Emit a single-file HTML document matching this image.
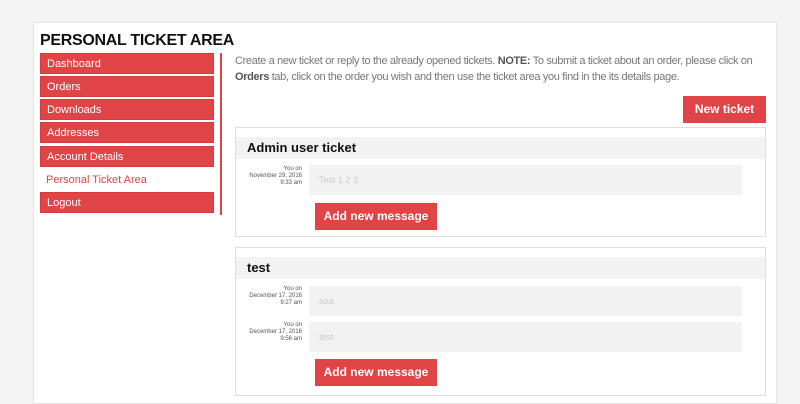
<!DOCTYPE html>
<html><head><style>
body{margin:0;width:800px;height:400px;background:#f3f3f3;font-family:"Liberation Sans",sans-serif;position:relative;overflow:hidden}
.a{position:absolute}
.panel{left:33px;top:22px;width:742px;height:380px;background:#fff;border:1px solid #e6e6e6}
.m{left:40px;width:174px;height:21px;background:#e04446;color:#fff;font-size:11px;line-height:21px;text-indent:6px;border:1px solid #d8393b;box-sizing:border-box}
.btn{background:#e04446;color:#fff;font-size:12px;font-weight:bold;text-align:center}
.box{left:235px;width:531px;background:#fff;border:1px solid #dedede;box-sizing:border-box}
.hd{left:236px;width:529px;height:22px;background:#f2f2f2;font-size:13px;font-weight:bold;line-height:22px;text-indent:11px;color:#111}
.dt{left:236px;width:66px;text-align:right;font-size:6px;line-height:7px;color:#555}
.msg{left:309px;width:433px;height:30px;background:#f2f2f2;color:#ccc;font-size:9px;line-height:30px;text-indent:10px}
</style></head><body>
<div class="a panel"></div>
<div class="a" style="left:40px;top:32px;font-size:16px;font-weight:bold;color:#111;letter-spacing:-0.3px">PERSONAL TICKET AREA</div>
<div class="a m" style="top:53px">Dashboard</div>
<div class="a m" style="top:76px">Orders</div>
<div class="a m" style="top:99px">Downloads</div>
<div class="a m" style="top:122px">Addresses</div>
<div class="a m" style="top:146px">Account Details</div>
<div class="a" style="left:46px;top:174px;font-size:11px;color:#e04446">Personal Ticket Area</div>
<div class="a m" style="top:192px">Logout</div>
<div class="a" style="left:220px;top:53px;width:2px;height:162px;background:#e04446"></div>
<div class="a" style="left:235px;top:53px;white-space:nowrap;font-size:11px;line-height:16px;color:#777;letter-spacing:-0.35px">Create a new ticket or reply to the already opened tickets. <b style="color:#555">NOTE:</b> To submit a ticket about an order, please click on<br><b style="color:#555">Orders</b> tab, click on the order you wish and then use the ticket area you find in the its details page.</div>
<div class="a btn" style="left:683px;top:96px;width:83px;height:27px;line-height:27px">New ticket</div>
<div class="a box" style="top:127px;height:110px"></div>
<div class="a hd" style="top:137px">Admin user ticket</div>
<div class="a dt" style="top:166px">You on<br>November 29, 2016<br>9:33 am</div>
<div class="a msg" style="top:165px">Test 1 2 3</div>
<div class="a btn" style="left:315px;top:203px;width:122px;height:27px;line-height:27px">Add new message</div>
<div class="a box" style="top:247px;height:149px"></div>
<div class="a hd" style="top:257px">test</div>
<div class="a dt" style="top:286px">You on<br>December 17, 2016<br>9:27 am</div>
<div class="a msg" style="top:286px">aaa</div>
<div class="a dt" style="top:322px">You on<br>December 17, 2016<br>9:56 am</div>
<div class="a msg" style="top:322px">test</div>
<div class="a btn" style="left:315px;top:359px;width:122px;height:27px;line-height:27px">Add new message</div>
</body></html>
